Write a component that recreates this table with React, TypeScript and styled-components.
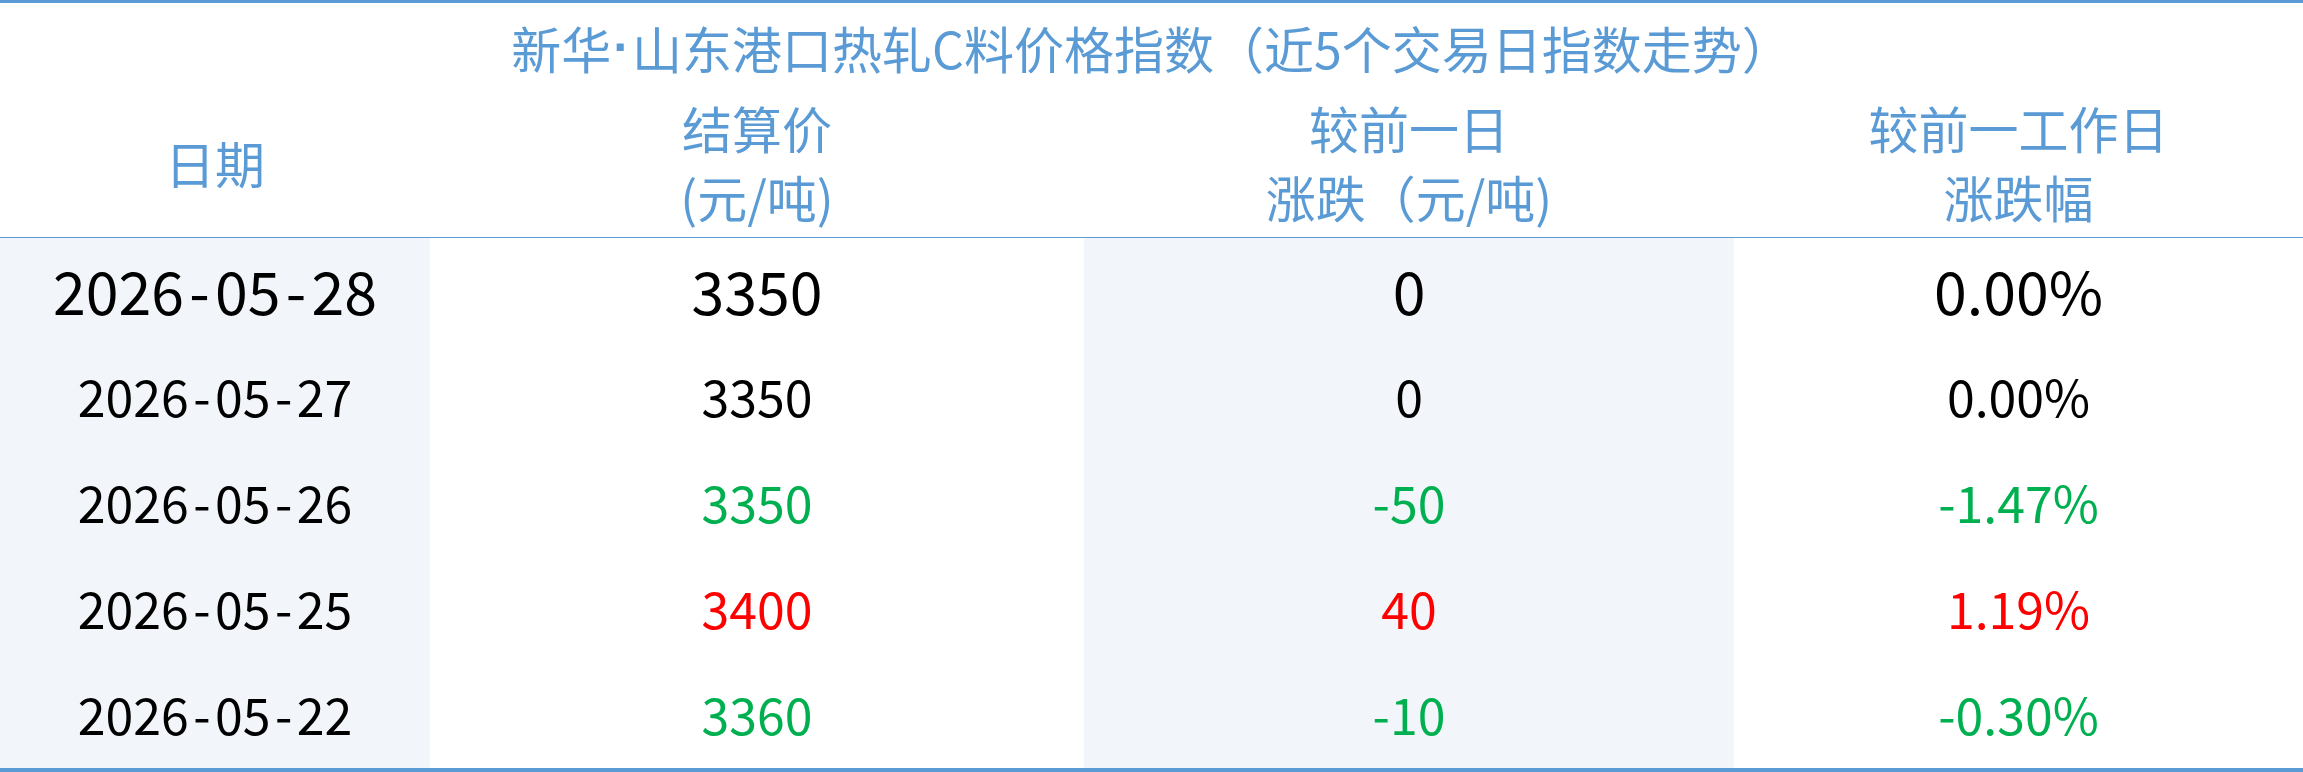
import React from "react";
import styled, { createGlobalStyle } from "styled-components";

const GlobalStyle = createGlobalStyle`
  html, body {
    margin: 0;
    padding: 0;
    background: #ffffff;
  }
  body {
    font-family: "Noto Sans CJK SC", "Noto Sans", sans-serif;
  }
`;

const COLS = "430px 654px 650px 1fr";
const BLUE = "#5b9bd5";

const Board = styled.div`
  width: 2303px;
  box-sizing: border-box;
  border-top: 3px solid ${BLUE};
  border-bottom: 4px solid ${BLUE};
  background: #ffffff;
`;

const Title = styled.div`
  height: 88px;
  display: flex;
  align-items: center;
  justify-content: center;
  font-size: 50px;
  color: ${BLUE};
  white-space: nowrap;
`;

const Dot = styled.span`
  font-family: "Liberation Sans", sans-serif;
  font-weight: 700;
  margin: 0 2px;
`;

const HeaderRow = styled.div`
  display: grid;
  grid-template-columns: ${COLS};
  height: 146px;
  border-bottom: 1px solid ${BLUE};
`;

const HeaderCell = styled.div`
  display: flex;
  flex-direction: column;
  align-items: center;
  justify-content: center;
  font-size: 50px;
  line-height: 69px;
  color: ${BLUE};
  white-space: nowrap;
  padding-bottom: 4px;
  box-sizing: border-box;
`;

const Body = styled.div`
  display: grid;
  grid-template-columns: ${COLS};
  grid-auto-rows: 106px;
`;

type Tone = "flat" | "down" | "up";

const toneColor: Record<Tone, string> = {
  flat: "#000000",
  down: "#00b050",
  up: "#ff0000",
};

const Cell = styled.div<{ $shaded: boolean; $tone: Tone; $big: boolean }>`
  display: flex;
  align-items: center;
  justify-content: center;
  background: ${(p) => (p.$shaded ? "#f2f6fb" : "#ffffff")};
  color: ${(p) => toneColor[p.$tone]};
  font-size: ${(p) => (p.$big ? "59px" : "50px")};
  white-space: nowrap;
  padding-bottom: 4px;
  box-sizing: border-box;
`;

const Dash = styled.span`
  padding: 0 0.09em;
`;

interface Row {
  date: string;
  price: string;
  diff: string;
  pct: string;
  tone: Tone;
}

const rows: Row[] = [
  { date: "2026-05-28", price: "3350", diff: "0", pct: "0.00%", tone: "flat" },
  { date: "2026-05-27", price: "3350", diff: "0", pct: "0.00%", tone: "flat" },
  { date: "2026-05-26", price: "3350", diff: "-50", pct: "-1.47%", tone: "down" },
  { date: "2026-05-25", price: "3400", diff: "40", pct: "1.19%", tone: "up" },
  { date: "2026-05-22", price: "3360", diff: "-10", pct: "-0.30%", tone: "down" },
];

function DateText({ value }: { value: string }) {
  const parts = value.split("-");
  return (
    <span>
      {parts.map((p, i) => (
        <React.Fragment key={i}>
          {i > 0 && <Dash>-</Dash>}
          {p}
        </React.Fragment>
      ))}
    </span>
  );
}

export default function App() {
  return (
    <>
      <GlobalStyle />
      <Board>
        <Title>
          新华<Dot>·</Dot>山东港口热轧C料价格指数（近5个交易日指数走势）
        </Title>
        <HeaderRow>
          <HeaderCell>
            <span>日期</span>
          </HeaderCell>
          <HeaderCell>
            <span>结算价</span>
            <span>(元/吨)</span>
          </HeaderCell>
          <HeaderCell>
            <span>较前一日</span>
            <span>涨跌（元/吨)</span>
          </HeaderCell>
          <HeaderCell>
            <span>较前一工作日</span>
            <span>涨跌幅</span>
          </HeaderCell>
        </HeaderRow>
        <Body>
          {rows.map((r, i) => (
            <React.Fragment key={r.date}>
              <Cell $shaded={true} $tone="flat" $big={i === 0}>
                <DateText value={r.date} />
              </Cell>
              <Cell $shaded={false} $tone={r.tone} $big={i === 0}>
                {r.price}
              </Cell>
              <Cell $shaded={true} $tone={r.tone} $big={i === 0}>
                {r.diff}
              </Cell>
              <Cell $shaded={false} $tone={r.tone} $big={i === 0}>
                {r.pct}
              </Cell>
            </React.Fragment>
          ))}
        </Body>
      </Board>
    </>
  );
}
